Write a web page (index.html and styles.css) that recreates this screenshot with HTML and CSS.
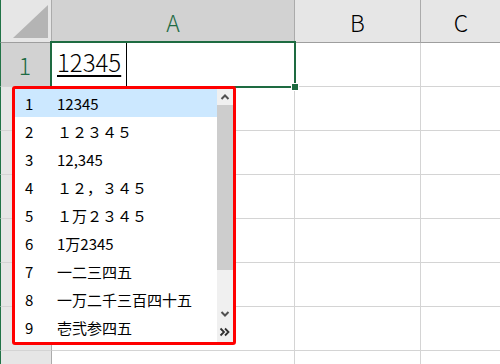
FILE: index.html
```html
<!DOCTYPE html>
<html lang="ja">
<head>
<meta charset="utf-8">
<link rel="stylesheet" href="styles.css">
</head>
<body>
<div class="sheet">
  <div class="grid">
    <div class="hdr corner">
      <svg class="tri" width="52" height="43" viewBox="0 0 52 43"><polygon points="13,38 48,38 48,5" fill="#b4b4b4"/></svg>
    </div>
    <div class="hdr col sel">A</div>
    <div class="hdr col">B</div>
    <div class="hdr col last">C</div>

    <div class="rh sel">1</div>
    <div class="cell"></div><div class="cell"></div><div class="cell last"></div>
    <div class="rh"></div>
    <div class="cell"></div><div class="cell"></div><div class="cell last"></div>
    <div class="rh"></div>
    <div class="cell"></div><div class="cell"></div><div class="cell last"></div>
    <div class="rh"></div>
    <div class="cell"></div><div class="cell"></div><div class="cell last"></div>
    <div class="rh"></div>
    <div class="cell"></div><div class="cell"></div><div class="cell last"></div>
    <div class="rh"></div>
    <div class="cell"></div><div class="cell"></div><div class="cell last"></div>
    <div class="rh"></div>
    <div class="cell"></div><div class="cell"></div><div class="cell last"></div>
    <div class="rh">8</div>
    <div class="cell"></div><div class="cell"></div><div class="cell last"></div>
  </div>

  <div class="selection"><span class="handle"></span></div>
  <div class="composing">12345</div>
  <div class="caret"></div>

  <div class="dropdown">
    <ul class="list">
      <li class="item active"><span class="num">1</span><span class="txt">12345</span></li>
      <li class="item"><span class="num">2</span><span class="txt">１２３４５</span></li>
      <li class="item"><span class="num">3</span><span class="txt">12,345</span></li>
      <li class="item"><span class="num">4</span><span class="txt">１２，３４５</span></li>
      <li class="item"><span class="num">5</span><span class="txt">１万２３４５</span></li>
      <li class="item"><span class="num">6</span><span class="txt">1万2345</span></li>
      <li class="item"><span class="num">7</span><span class="txt">一二三四五</span></li>
      <li class="item"><span class="num">8</span><span class="txt">一万二千三百四十五</span></li>
      <li class="item"><span class="num">9</span><span class="txt">壱弐参四五</span></li>
    </ul>
    <div class="scroll">
      <div class="sbtn up"><svg width="10" height="8" viewBox="0 0 10 8"><polyline points="1.5,6 5,2.5 8.5,6" fill="none" stroke="#505050" stroke-width="2"/></svg></div>
      <div class="thumb"></div>
      <div class="track"></div>
      <div class="sbtn down"><svg width="10" height="8" viewBox="0 0 10 8"><polyline points="1.5,2 5,5.5 8.5,2" fill="none" stroke="#505050" stroke-width="2"/></svg></div>
      <div class="sbtn more"><svg width="12" height="10" viewBox="0 0 12 10"><polyline points="1.5,1.5 5,5 1.5,8.5" fill="none" stroke="#303030" stroke-width="1.8"/><polyline points="6,1.5 9.5,5 6,8.5" fill="none" stroke="#303030" stroke-width="1.8"/></svg></div>
    </div>
  </div>
</div>
</body>
</html>
```

FILE: styles.css
```css
html, body {
  margin: 0;
  padding: 0;
  width: 500px;
  height: 364px;
  overflow: hidden;
  background: #ffffff;
}

.sheet {
  position: relative;
  width: 500px;
  height: 364px;
  overflow: hidden;
  font-family: "Noto Sans CJK JP", "Noto Sans", sans-serif;
}

.grid {
  display: grid;
  grid-template-columns: 52px 243px 126px 80px;
  grid-template-rows: 43px repeat(8, 44px);
  box-sizing: border-box;
  margin-left: -1px;
  padding-left: 1px;
}

.hdr {
  box-sizing: border-box;
  background: #e6e6e6;
  border-right: 1px solid #ababab;
  border-bottom: 1px solid #9e9e9e;
  display: flex;
  align-items: center;
  justify-content: center;
  font-size: 23px;
  font-weight: 300;
  color: #000;
  line-height: 1;
}

.hdr.corner {
  position: relative;
  border-left: 1px solid #217346;
}

.tri {
  display: block;
  position: absolute;
  left: -1px;
  top: 0;
}

.hdr.col {
  padding-top: 2px;
}

.hdr.sel {
  background: #d2d2d2;
  color: #1e6b44;
}

.hdr.last, .cell.last {
  border-right: none;
}

.rh {
  box-sizing: border-box;
  background: #e6e6e6;
  border-left: 1px solid #217346;
  border-right: 1px solid #ababab;
  border-bottom: 1px solid #d4d4d4;
  display: flex;
  align-items: center;
  justify-content: center;
  font-size: 23px;
  font-weight: 300;
  line-height: 1;
  color: #000;
  padding-top: 2px;
  padding-right: 2px;
}

.rh.sel {
  background: #d2d2d2;
  color: #1e6b44;
}

.cell {
  box-sizing: border-box;
  border-right: 1px solid #d4d4d4;
  border-bottom: 1px solid #d4d4d4;
}

.selection {
  position: absolute;
  left: 50px;
  top: 41px;
  width: 246px;
  height: 47px;
  box-sizing: border-box;
  border: 2px solid #1e6b41;
}

.handle {
  position: absolute;
  right: -5px;
  bottom: -5px;
  width: 6px;
  height: 6px;
  background: #1e6b41;
  border: 1px solid #ffffff;
}

.composing {
  position: absolute;
  left: 57px;
  top: 46px;
  font-size: 24px;
  font-weight: 300;
  line-height: 32px;
  color: #000;
  text-decoration: underline;
  text-decoration-thickness: 2px;
  text-underline-offset: 3px;
}

.caret {
  position: absolute;
  left: 126px;
  top: 43px;
  width: 1px;
  height: 43px;
  background: #000;
}

.dropdown {
  position: absolute;
  left: 12px;
  top: 86px;
  width: 224px;
  height: 259px;
  box-sizing: border-box;
  border: 3px solid #ff0000;
  border-radius: 3px;
  background: #ffffff;
  display: flex;
}

.list {
  list-style: none;
  margin: 0;
  padding: 0;
  width: 202px;
}

.item {
  height: 28px;
  display: flex;
  align-items: center;
  font-size: 15px;
  color: #000;
}

.item.active {
  background: #cce8ff;
}

.num {
  width: 42px;
  padding-left: 10px;
  box-sizing: border-box;
}

.txt {
  white-space: nowrap;
}

.scroll {
  width: 16px;
  display: flex;
  flex-direction: column;
  background: #f0f0f0;
}

.sbtn {
  height: 16px;
  display: flex;
  align-items: center;
  justify-content: center;
}

.sbtn svg {
  display: block;
}

.thumb {
  height: 165px;
  background: #cdcdcd;
}

.track {
  flex: 1;
}

.sbtn.more {
  height: 20px;
  background: #f0f0f0;
}
```
